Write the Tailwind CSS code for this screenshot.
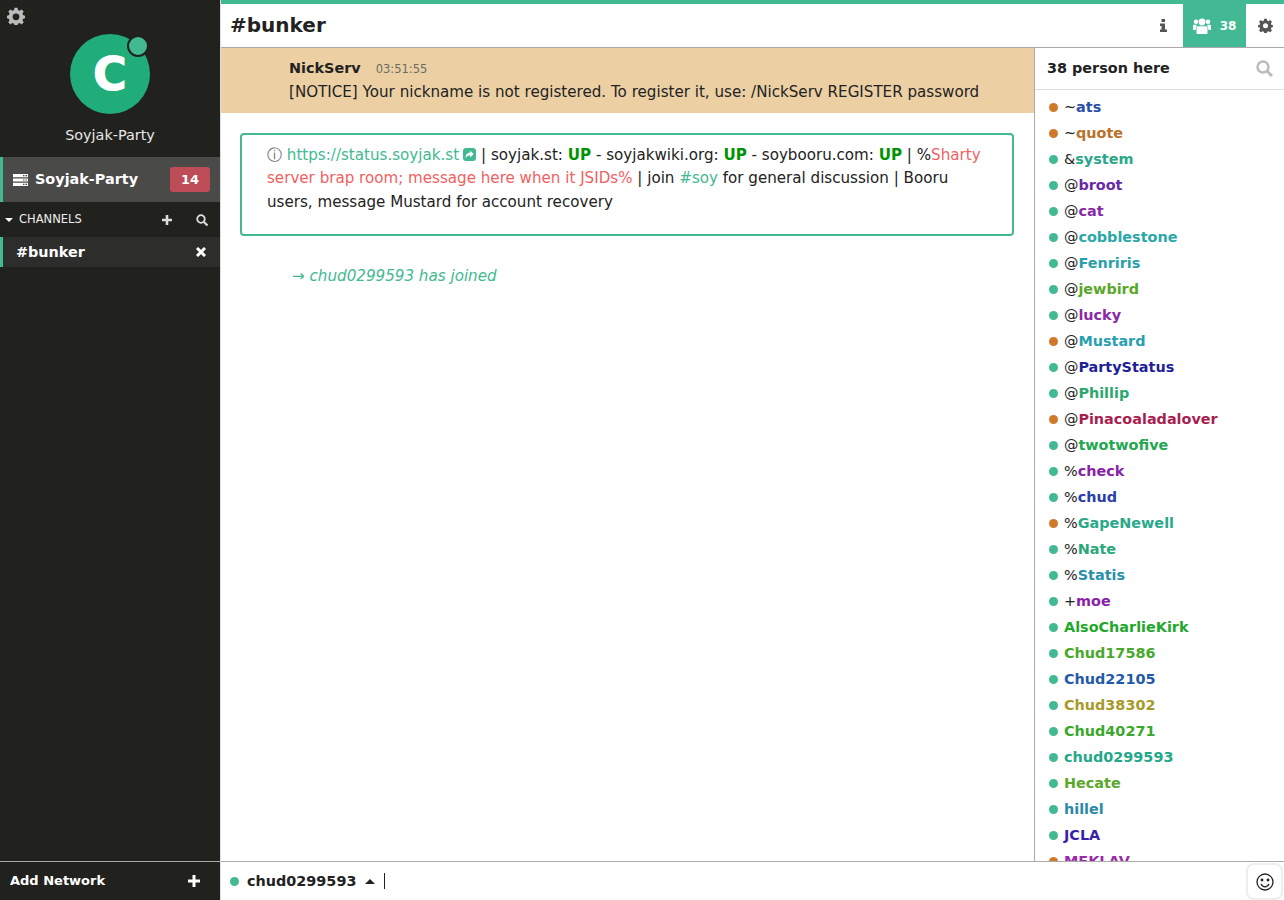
<!doctype html>
<html><head><meta charset="utf-8"><script src="https://cdn.jsdelivr.net/npm/@tailwindcss/browser@4"></script></head>
<body class="m-0 overflow-hidden">
<div class="flex h-[900px] w-[1284px] overflow-hidden bg-white font-['DejaVu_Sans',sans-serif] text-[14.4px] text-[#222]">
<aside class="flex h-full w-[220px] shrink-0 flex-col bg-[#21211e] text-white">
  <div class="relative h-[157px] shrink-0">
    <svg class="absolute left-[7px] top-[7px] h-[18px] w-[18px] text-[#bbb]" viewBox="0 0 24 24" fill="currentColor"><path fill-rule="evenodd" d="M10 1h4l.6 3 2.3 1 2.6-1.700 2.800 2.800L20.600 8.700l1 2.300 2.400.5v3.500l-2.400.5-1 2.300 1.700 2.600-2.800 2.800-2.600-1.700-2.300 1-.6 2.500h-4l-.6-2.500-2.300-1-2.600 1.700-2.800-2.800 1.700-2.600-1-2.300L0 15v-3.500l2.400-.5 1-2.300L1.700 6.100l2.800-2.800 2.600 1.700 2.300-1zM12 8.500a4.500 4.500 0 1 0 0 9 4.500 4.500 0 0 0 0-9z"/></svg>
    <div class="absolute left-[70px] top-[34px] flex h-20 w-20 items-center justify-center rounded-full bg-[#20ad79] text-[46px] font-bold [-webkit-text-stroke:1px_white]">C</div>
    <div class="absolute left-[127px] top-[35px] h-[22px] w-[22px] rounded-full border-2 border-[#21211e] bg-[#42b992]"></div>
    <div class="absolute inset-x-0 top-[126px] text-center leading-[18px] text-[#e8e8e8]">Soyjak-Party</div>
  </div>
  <div class="flex h-[45px] shrink-0 items-center border-l-[3px] border-[#42b992] bg-[#4a4a49] pl-[10px] pr-[10px]">
    <svg class="mr-[7px] h-[12px] w-[15px]" viewBox="0 0 15 12"><path fill="#fff" d="M0 0h15v3.200H0zM0 4.400h15v3.200H0zM0 8.800h15V12H0z"/><path fill="#4a4a49" d="M10 1h1.500v1.200H10zM12.500 1H14v1.200h-1.500zM10 5.400h1.500v1.200H10zM12.500 5.400H14v1.200h-1.500zM10 9.800h1.500V11H10zM12.500 9.800H14V11h-1.500z"/></svg>
    <span class="flex-1 font-bold">Soyjak-Party</span>
    <span class="flex h-[25px] w-10 items-center justify-center rounded-[3px] bg-[#bd4c56] text-[13px] font-bold">14</span>
  </div>
  <div class="flex h-[35px] shrink-0 items-center pl-[5px] text-[#eee]">
    <svg class="mr-[6px] h-[4px] w-[8px]" viewBox="0 0 8 4" fill="#fff"><path d="M0 0h8L4 4z"/></svg>
    <span class="flex-1 text-[11.500px]">CHANNELS</span>
    <svg class="mr-[24px] h-[10px] w-[10px]" viewBox="0 0 10 10" fill="#ddd"><path d="M3.700 0h2.600v3.700H10v2.600H6.300V10H3.700V6.300H0V3.700h3.700z"/></svg>
    <svg class="mr-[12px] h-[12px] w-[12px]" viewBox="0 0 12 12" fill="none" stroke="#ddd" stroke-width="1.800"><circle cx="5" cy="5" r="3.800"/><path d="M8 8l3.500 3.500" stroke-width="2.200"/></svg>
  </div>
  <div class="flex h-[30px] shrink-0 items-center border-l-[3px] border-[#42b992] bg-[#2d2d2b] pl-[13px] pr-[14px]">
    <span class="flex-1 pt-[1px] font-bold">#bunker</span>
    <svg class="h-[10px] w-[10px]" viewBox="0 0 10 10" stroke="#fff" stroke-width="3"><path d="M1 1l8 8M9 1L1 9"/></svg>
  </div>
  <div class="flex-1"></div>
  <div class="flex h-[39px] shrink-0 items-center border-t border-[#aaa] pl-[10px] pr-[20px]">
    <span class="flex-1 text-[13px] font-bold">Add Network</span>
    <svg class="h-[12px] w-[12px]" viewBox="0 0 12 12" fill="#fff"><path d="M4.500 0h3v4.500H12v3H7.500V12h-3V7.500H0v-3h4.500z"/></svg>
  </div>
</aside>
<main class="flex h-full min-w-0 flex-1 flex-col border-l border-[#ddd]">
  <header class="flex h-[48px] shrink-0 items-stretch border-t-4 border-b border-t-[#42b992] border-b-[#aaa]">
    <h1 class="flex-1 pl-[9px] text-[20px] font-bold leading-[43px]">#bunker</h1>
    <div class="flex w-[40px] items-center justify-center">
      <svg class="h-[13px] w-[7px]" viewBox="0 0 7 13" fill="#555"><path d="M1.500 0h3.500v3H1.500zM0 4.500h5v6h2V13H0v-2.500h1.500v-3.500H0z"/></svg>
    </div>
    <div class="flex w-[63px] items-center justify-center gap-[9px] bg-[#42b992] text-white">
      <svg class="h-[16px] w-[18px]" viewBox="0 0 18 16" fill="#fff"><circle cx="9" cy="4" r="3.400"/><circle cx="3" cy="3.800" r="2.300"/><circle cx="15" cy="3.800" r="2.300"/><path d="M4.800 8.300h8.400c.8 0 1.300.6 1.300 1.300v5.400c0 .6-.4 1-1 1H4.500c-.6 0-1-.4-1-1V9.600c0-.7.5-1.300 1.300-1.300zM1 6.800h2.800L2.500 12H0V8c0-.7.400-1.200 1-1.200zM14.200 6.800H17c.6 0 1 .5 1 1.200v4h-2.500z"/></svg>
      <span class="text-xs font-bold">38</span>
    </div>
    <div class="flex w-[38px] items-center justify-center">
      <svg class="h-[15px] w-[15px]" viewBox="0 0 24 24" fill="#555"><path fill-rule="evenodd" d="M10 1h4l.6 3 2.300 1 2.600-1.700 2.800 2.800L20.600 8.700l1 2.300 2.400.5v3l-2.400.5-1 2.300 1.700 2.600-2.800 2.800-2.600-1.700-2.300 1-.6 2.500h-4l-.6-2.500-2.300-1-2.600 1.700-2.800-2.800 1.700-2.600-1-2.300L0 14.500v-3l2.400-.5 1-2.300L1.700 6.100l2.800-2.800 2.600 1.700 2.300-1zM12 8.500a4 4 0 1 0 0 8 4 4 0 0 0 0-8z"/></svg>
    </div>
  </header>
  <div class="flex min-h-0 flex-1">
    <section class="min-w-0 flex-1">
      <div class="h-[65px] bg-[#ecd0a4] pl-[68px] pt-[11px]">
        <div class="flex items-baseline leading-[18px]"><b>NickServ</b><span class="ml-[15px] text-[11.500px] text-[#6b6b5f]">03:51:55</span></div>
        <div class="mt-[4px] text-[15.120px] leading-[20px]">[NOTICE] Your nickname is not registered. To register it, use: /NickServ REGISTER password</div>
      </div>
      <div class="ml-[19px] mr-5 mt-5 h-[103px] rounded-[4px] border-2 border-[#42b992] pl-[25px] pr-[20px] pt-[9px] text-[15.120px] leading-[23.400px]">
        <span class="text-[#666]">ⓘ</span> <span class="text-[#42b992]">https://status.soyjak.st</span><svg class="ml-[4px] mr-[5px] inline h-[13px] w-[13px] align-[-1px]" viewBox="0 0 13 13"><rect width="13" height="13" rx="3" fill="#42b992"/><path d="M2.800 10.200c-.5-3.500 1.700-5.400 4.400-5.400V2.800l3.500 3.300-3.500 3.300V7.300c-2 0-3.500.8-4.400 2.900z" fill="#fff"/></svg>| soyjak.st: <b class="text-[#009300]">UP</b> - soyjakwiki.org: <b class="text-[#009300]">UP</b> - soybooru.com: <b class="text-[#009300]">UP</b> | %<span class="text-[#f35f5f]">Sharty server brap room; message here when it JSIDs%</span> | join <span class="text-[#42b992]">#soy</span> for general discussion | Booru users, message Mustard for account recovery
      </div>
      <div class="ml-[71px] mt-[30px] text-[15.150px] italic leading-[20px] text-[#42b992]">→ chud0299593 has joined</div>
    </section>
    <aside class="flex h-full w-[250px] shrink-0 flex-col overflow-hidden border-l border-[#aaa]">
      <div class="flex h-[42px] shrink-0 items-center justify-between border-b border-[#ddd] pl-3 pr-[11px]">
        <span class="font-bold">38 person here</span>
        <svg class="h-[17px] w-[17px]" viewBox="0 0 17 17" fill="none" stroke="#bbb" stroke-width="2.400"><circle cx="7" cy="7" r="5.500"/><path d="M11 11l5 5" stroke-width="3"/></svg>
      </div>
      <ul class="min-h-0 flex-1 overflow-hidden pt-[4px] font-bold leading-[26px]">
        <li class="flex items-center pl-[14px]"><i class="mr-[6px] h-[9px] w-[9px] rounded-full bg-[#d0782a]"></i><span class="font-normal">~</span><span class="text-[#2a4fa8]">ats</span></li>
        <li class="flex items-center pl-[14px]"><i class="mr-[6px] h-[9px] w-[9px] rounded-full bg-[#d0782a]"></i><span class="font-normal">~</span><span class="text-[#b8722c]">quote</span></li>
        <li class="flex items-center pl-[14px]"><i class="mr-[6px] h-[9px] w-[9px] rounded-full bg-[#42b992]"></i><span class="font-normal">&amp;</span><span class="text-[#2aa889]">system</span></li>
        <li class="flex items-center pl-[14px]"><i class="mr-[6px] h-[9px] w-[9px] rounded-full bg-[#42b992]"></i><span class="font-normal">@</span><span class="text-[#6a2aa8]">broot</span></li>
        <li class="flex items-center pl-[14px]"><i class="mr-[6px] h-[9px] w-[9px] rounded-full bg-[#42b992]"></i><span class="font-normal">@</span><span class="text-[#8a2aa8]">cat</span></li>
        <li class="flex items-center pl-[14px]"><i class="mr-[6px] h-[9px] w-[9px] rounded-full bg-[#42b992]"></i><span class="font-normal">@</span><span class="text-[#2aa8a8]">cobblestone</span></li>
        <li class="flex items-center pl-[14px]"><i class="mr-[6px] h-[9px] w-[9px] rounded-full bg-[#42b992]"></i><span class="font-normal">@</span><span class="text-[#2a9fa8]">Fenriris</span></li>
        <li class="flex items-center pl-[14px]"><i class="mr-[6px] h-[9px] w-[9px] rounded-full bg-[#42b992]"></i><span class="font-normal">@</span><span class="text-[#5aa82a]">jewbird</span></li>
        <li class="flex items-center pl-[14px]"><i class="mr-[6px] h-[9px] w-[9px] rounded-full bg-[#42b992]"></i><span class="font-normal">@</span><span class="text-[#8a2aa8]">lucky</span></li>
        <li class="flex items-center pl-[14px]"><i class="mr-[6px] h-[9px] w-[9px] rounded-full bg-[#d0782a]"></i><span class="font-normal">@</span><span class="text-[#2a9fb0]">Mustard</span></li>
        <li class="flex items-center pl-[14px]"><i class="mr-[6px] h-[9px] w-[9px] rounded-full bg-[#42b992]"></i><span class="font-normal">@</span><span class="text-[#1f1f9a]">PartyStatus</span></li>
        <li class="flex items-center pl-[14px]"><i class="mr-[6px] h-[9px] w-[9px] rounded-full bg-[#42b992]"></i><span class="font-normal">@</span><span class="text-[#2aa870]">Phillip</span></li>
        <li class="flex items-center pl-[14px]"><i class="mr-[6px] h-[9px] w-[9px] rounded-full bg-[#d0782a]"></i><span class="font-normal">@</span><span class="text-[#a81f4f]">Pinacoaladalover</span></li>
        <li class="flex items-center pl-[14px]"><i class="mr-[6px] h-[9px] w-[9px] rounded-full bg-[#42b992]"></i><span class="font-normal">@</span><span class="text-[#1fa84f]">twotwofive</span></li>
        <li class="flex items-center pl-[14px]"><i class="mr-[6px] h-[9px] w-[9px] rounded-full bg-[#42b992]"></i><span class="font-normal">%</span><span class="text-[#8a1fa8]">check</span></li>
        <li class="flex items-center pl-[14px]"><i class="mr-[6px] h-[9px] w-[9px] rounded-full bg-[#42b992]"></i><span class="font-normal">%</span><span class="text-[#2a3fa8]">chud</span></li>
        <li class="flex items-center pl-[14px]"><i class="mr-[6px] h-[9px] w-[9px] rounded-full bg-[#d0782a]"></i><span class="font-normal">%</span><span class="text-[#2aa88a]">GapeNewell</span></li>
        <li class="flex items-center pl-[14px]"><i class="mr-[6px] h-[9px] w-[9px] rounded-full bg-[#42b992]"></i><span class="font-normal">%</span><span class="text-[#2aa87a]">Nate</span></li>
        <li class="flex items-center pl-[14px]"><i class="mr-[6px] h-[9px] w-[9px] rounded-full bg-[#42b992]"></i><span class="font-normal">%</span><span class="text-[#2a8fa8]">Statis</span></li>
        <li class="flex items-center pl-[14px]"><i class="mr-[6px] h-[9px] w-[9px] rounded-full bg-[#42b992]"></i><span class="font-normal">+</span><span class="text-[#8a1fa8]">moe</span></li>
        <li class="flex items-center pl-[14px]"><i class="mr-[6px] h-[9px] w-[9px] rounded-full bg-[#42b992]"></i><span class="text-[#1fa82a]">AlsoCharlieKirk</span></li>
        <li class="flex items-center pl-[14px]"><i class="mr-[6px] h-[9px] w-[9px] rounded-full bg-[#42b992]"></i><span class="text-[#4aa82a]">Chud17586</span></li>
        <li class="flex items-center pl-[14px]"><i class="mr-[6px] h-[9px] w-[9px] rounded-full bg-[#42b992]"></i><span class="text-[#1f5aa8]">Chud22105</span></li>
        <li class="flex items-center pl-[14px]"><i class="mr-[6px] h-[9px] w-[9px] rounded-full bg-[#42b992]"></i><span class="text-[#a89a2a]">Chud38302</span></li>
        <li class="flex items-center pl-[14px]"><i class="mr-[6px] h-[9px] w-[9px] rounded-full bg-[#42b992]"></i><span class="text-[#3aa82a]">Chud40271</span></li>
        <li class="flex items-center pl-[14px]"><i class="mr-[6px] h-[9px] w-[9px] rounded-full bg-[#42b992]"></i><span class="text-[#1fa88a]">chud0299593</span></li>
        <li class="flex items-center pl-[14px]"><i class="mr-[6px] h-[9px] w-[9px] rounded-full bg-[#42b992]"></i><span class="text-[#5aa82a]">Hecate</span></li>
        <li class="flex items-center pl-[14px]"><i class="mr-[6px] h-[9px] w-[9px] rounded-full bg-[#42b992]"></i><span class="text-[#2a8aa8]">hillel</span></li>
        <li class="flex items-center pl-[14px]"><i class="mr-[6px] h-[9px] w-[9px] rounded-full bg-[#42b992]"></i><span class="text-[#3a1fa8]">JCLA</span></li>
        <li class="flex items-center pl-[14px]"><i class="mr-[6px] h-[9px] w-[9px] rounded-full bg-[#d0782a]"></i><span class="text-[#9a2aa8]">MEKLAV</span></li>
      </ul>
    </aside>
  </div>
  <footer class="relative flex h-[39px] shrink-0 items-center border-t border-[#aaa] pl-[9px]">
    <i class="mr-[8px] h-[9px] w-[9px] rounded-full bg-[#42b992]"></i>
    <span class="pt-[1px] font-bold">chud0299593</span>
    <svg class="ml-[9px] h-[5px] w-[10px]" viewBox="0 0 10 5" fill="#222"><path d="M5 0l5 5H0z"/></svg>
    <span class="ml-[9px] h-[16px] w-px bg-[#222]"></span>
    <div class="absolute right-[1px] top-[1px] flex h-[37px] w-[37px] items-center justify-center rounded-[8px] border-2 border-[#eee]">
      <svg class="h-[18px] w-[18px]" viewBox="0 0 18 18" fill="none" stroke="#222" stroke-width="1.300"><circle cx="9" cy="9" r="8"/><circle cx="6" cy="7" r=".8" fill="#222"/><circle cx="12" cy="7" r=".8" fill="#222"/><path d="M5 11c1 2 2.500 2.800 4 2.800s3-.8 4-2.800"/></svg>
    </div>
  </footer>
</main>
</div>
</body></html>
